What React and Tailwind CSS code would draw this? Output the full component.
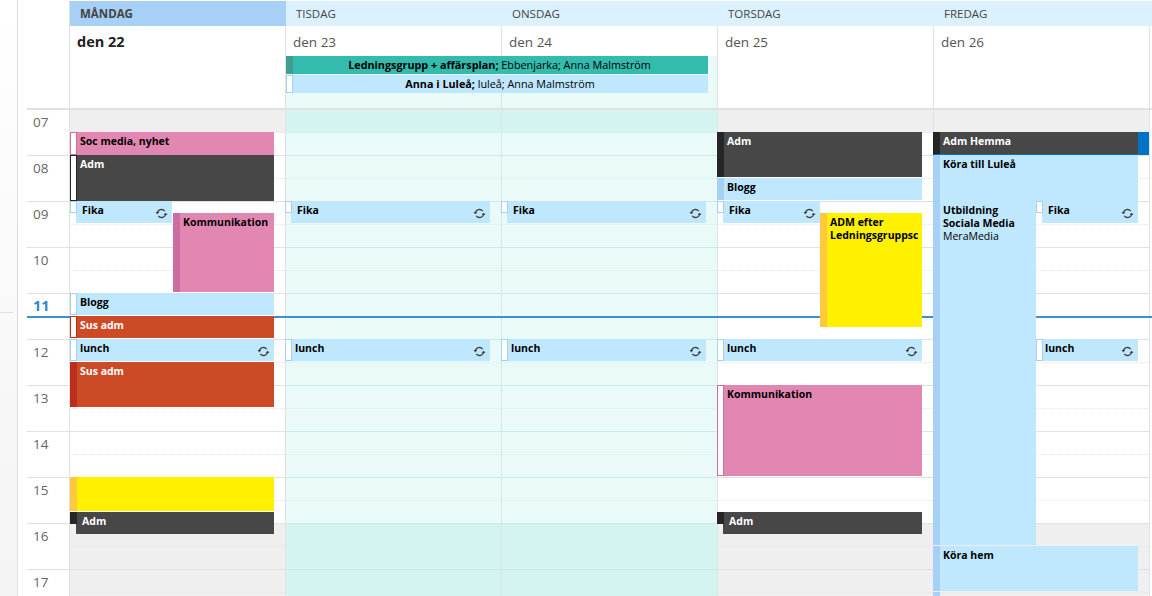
import React from "react";

const Recur = () => (
  <svg viewBox="0 0 12 10" className="absolute right-[4px] bottom-[4px] w-[13px] h-[11px]" fill="none" stroke="#444" strokeWidth="1.2">
    <path d="M2.2 5A3.8 3.8 0 0 1 9 2.8" />
    <path d="M9.8 5A3.8 3.8 0 0 1 3 7.2" />
    <path d="M0.4 3.6 L2.2 5.6 L4 3.6" fill="#444" stroke="none" />
    <path d="M8 6.4 L9.8 4.4 L11.6 6.4" fill="#444" stroke="none" />
  </svg>
);

const Ev = ({ box, bg, text = "text-black", strip, hollow, short, recur, lines, pad = "pl-[10px]" }) => (
  <div className={`absolute z-20 overflow-hidden ${box} ${short ? "" : bg}`}>
    {short ? (
      <>
        <div className={`absolute left-[6px] top-0 right-0 bottom-0 ${bg}`} />
        <div className={`absolute left-0 top-0 w-[7px] h-[12px] ${hollow ? "bg-white border " + hollow : strip}`} />
      </>
    ) : hollow ? (
      <div className={`absolute left-0 top-0 bottom-0 w-[7px] bg-white border ${hollow}`} />
    ) : strip ? (
      <div className={`absolute left-0 top-0 bottom-0 w-[7px] ${strip}`} />
    ) : null}
    <div className={`relative overflow-hidden mt-[3px] mr-[4px] ${short ? "pl-[12px]" : pad} text-[10.5px] leading-[13px] font-bold whitespace-nowrap ${text}`}>
      {lines.map((l, i) => (
        <div key={i} className={l.startsWith("~") ? "font-normal" : ""}>{l.replace("~", "")}</div>
      ))}
    </div>
    {recur && <Recur />}
  </div>
);

const pink = "bg-[#e287b1]";
const dark = "bg-[#474747]";
const blue = "bg-[#bfe7fd]";
const rust = "bg-[#cc4a26]";
const yellow = "bg-[#fff100]";

const hB = "border-[#a6d0f5]";
const pS = "bg-[#cd6ca0]";
const bS = "bg-[#a6d0f5]";
const dS = "bg-[#252525]";
const yS = "bg-[#ffc83d]";

const days = [
  {
    name: "MÅNDAG", date: "den 22", active: true,
    events: [
      { box: "left-0 top-[22px] w-[204px] h-[23px]", bg: pink, hollow: "border-[#cd6ca0]", lines: ["Soc media, nyhet"] },
      { box: "left-0 top-[45px] w-[204px] h-[46px]", bg: dark, text: "text-white", hollow: "border-[#252525]", lines: ["Adm"] },
      { box: "left-0 top-[91px] w-[102px] h-[22px]", bg: blue, hollow: hB, short: true, recur: true, lines: ["Fika"] },
      { box: "left-[103px] top-[103px] w-[101px] h-[79px]", bg: pink, strip: pS, lines: ["Kommunikation"] },
      { box: "left-0 top-[183px] w-[204px] h-[22px]", bg: blue, hollow: hB, lines: ["Blogg"] },
      { box: "left-0 top-[206px] w-[204px] h-[22px]", bg: rust, text: "text-white", hollow: "border-[#bc2e1c]", lines: ["Sus adm"] },
      { box: "left-0 top-[229px] w-[204px] h-[22px]", bg: blue, hollow: hB, recur: true, lines: ["lunch"] },
      { box: "left-0 top-[252px] w-[204px] h-[45px]", bg: rust, text: "text-white", strip: "bg-[#bc2e1c]", lines: ["Sus adm"] },
      { box: "left-0 top-[367px] w-[204px] h-[34px]", bg: yellow, strip: yS, lines: [""] },
      { box: "left-0 top-[402px] w-[204px] h-[22px]", bg: dark, text: "text-white", strip: dS, short: true, lines: ["Adm"] },
    ],
  },
  {
    name: "TISDAG", date: "den 23", teal: true,
    events: [
      { box: "left-[-1px] top-[91px] w-[205px] h-[22px]", bg: blue, hollow: hB, short: true, recur: true, lines: ["Fika"] },
      { box: "left-[-1px] top-[229px] w-[205px] h-[22px]", bg: blue, hollow: hB, recur: true, lines: ["lunch"] },
    ],
  },
  {
    name: "ONSDAG", date: "den 24", teal: true,
    events: [
      { box: "left-[-1px] top-[91px] w-[205px] h-[22px]", bg: blue, hollow: hB, short: true, recur: true, lines: ["Fika"] },
      { box: "left-[-1px] top-[229px] w-[205px] h-[22px]", bg: blue, hollow: hB, recur: true, lines: ["lunch"] },
    ],
  },
  {
    name: "TORSDAG", date: "den 25",
    events: [
      { box: "left-[-1px] top-[22px] w-[205px] h-[45px]", bg: dark, text: "text-white", strip: dS, lines: ["Adm"] },
      { box: "left-[-1px] top-[68px] w-[205px] h-[22px]", bg: blue, strip: bS, lines: ["Blogg"] },
      { box: "left-[-1px] top-[91px] w-[103px] h-[22px]", bg: blue, hollow: hB, short: true, recur: true, lines: ["Fika"] },
      { box: "left-[102px] top-[103px] w-[102px] h-[114px]", bg: yellow, strip: yS, lines: ["ADM efter", "Ledningsgruppsc"] },
      { box: "left-[-1px] top-[229px] w-[205px] h-[22px]", bg: blue, hollow: hB, recur: true, lines: ["lunch"] },
      { box: "left-[-1px] top-[275px] w-[205px] h-[91px]", bg: pink, hollow: "border-[#cd6ca0]", lines: ["Kommunikation"] },
      { box: "left-[-1px] top-[402px] w-[205px] h-[22px]", bg: dark, text: "text-white", strip: dS, short: true, lines: ["Adm"] },
    ],
  },
  {
    name: "FREDAG", date: "den 26",
    events: [
      { box: "left-[204px] top-[22px] w-[11px] h-[23px]", bg: "bg-[#0072c6]", lines: [""] },
      { box: "left-[-1px] top-[22px] w-[205px] h-[23px]", bg: dark, text: "text-white", strip: dS, lines: ["Adm Hemma"] },
      { box: "left-0 top-[44px] w-[204px] h-px", bg: "bg-[#0072c6]", lines: [] },
      { box: "left-[-1px] top-[45px] w-[205px] h-[46px]", bg: blue, strip: bS, lines: ["Köra till Luleå"] },
      { box: "left-[-1px] top-[91px] w-[103px] h-[344px]", bg: blue, strip: bS, lines: ["Utbildning", "Sociala Media", "~MeraMedia"] },
      { box: "left-[102px] top-[91px] w-[102px] h-[22px]", bg: blue, hollow: hB, short: true, recur: true, lines: ["Fika"] },
      { box: "left-[102px] top-[229px] w-[102px] h-[22px]", bg: blue, hollow: hB, recur: true, pad: "pl-[9px]", lines: ["lunch"] },
      { box: "left-[-1px] top-[436px] w-[205px] h-[45px]", bg: blue, strip: bS, lines: ["Köra hem"] },
      { box: "left-[-1px] top-[482px] w-[7px] h-[14px]", bg: bS, lines: [""] },
    ],
  },
];

const hours = ["07", "08", "09", "10", "11", "12", "13", "14", "15", "16", "17"];

const DayColumn = ({ day }) => {
  const slotBg = (off) =>
    day.teal ? (off ? "bg-[#d3f4f1]" : "bg-[#eafaf8]") : off ? "bg-[#efefef]" : "bg-white";
  const solid = day.teal ? "border-[#c8ece8]" : "border-[#e1e1e1]";
  const dot = day.teal ? "border-[#d3f1ee]" : "border-[#e6e6e6]";
  return (
    <div className="w-[216px] shrink-0 flex flex-col">
      <div
        className={`mt-px h-[25px] shrink-0 flex items-center text-[11.5px] text-[#444] ${
          day.active ? "bg-[#a6d0f5] font-bold pl-[10px]" : "bg-[#dcf1fe] pl-[10px]"
        }`}
      >
        {day.name}
      </div>
      <div className="h-[82px] shrink-0 flex flex-col border-r border-[#e1e1e1]">
        <div className={`h-[30px] pl-[7px] pt-[6px] leading-[20px] ${day.active ? "text-[14.5px] font-bold text-[#222]" : "text-[13.5px] text-[#555]"}`}>
          {day.date}
        </div>
        <div className={`flex-1 ${day.teal ? "bg-[#eafaf8]" : "bg-white"}`} />
      </div>
      <div className="h-[2px] shrink-0 bg-[#e1e1e1]" />
      <div className={`relative shrink-0 border-r ${day.teal ? "border-[#d5e8e6]" : "border-[#e1e1e1]"}`}>
        {hours.map((h, i) => (
          <div key={h}>
            <div className={`h-[23px] border-b border-dotted ${dot} ${slotBg(i === 0 || i >= 9)}`} />
            <div className={`h-[23px] border-b ${solid} ${slotBg(i >= 9)}`} />
          </div>
        ))}
        {day.events.map((e, i) => (
          <Ev key={i} {...e} />
        ))}
      </div>
    </div>
  );
};

export default function App() {
  return (
    <div className="relative flex w-[1152px] h-[596px] overflow-hidden bg-white font-['Open_Sans','Noto_Sans',sans-serif]">
      <div className="w-[18px] shrink-0 border-r border-[#dddddd] bg-gradient-to-b from-white to-[#f4f4f4]">
        <div className="mt-[312px] w-[13px] h-px bg-[#e1e1e1]" />
      </div>
      <div className="w-[9px] shrink-0" />
      <div className="w-[43px] shrink-0 flex flex-col border-r border-[#e1e1e1]">
        <div className="h-[108px] shrink-0" />
        <div className="h-[2px] shrink-0 bg-[#e1e1e1]" />
        {hours.map((h) => (
          <div
            key={h}
            className={`h-[46px] shrink-0 border-b border-[#e1e1e1] pl-[6px] pt-[2px] leading-[20px] ${
              h === "11" ? "text-[14.5px] font-bold text-[#2d87d0]" : "text-[13.5px] text-[#666]"
            }`}
          >
            {h}
          </div>
        ))}
      </div>
      {days.map((d) => (
        <DayColumn key={d.name} day={d} />
      ))}
      <div className="flex-1 flex flex-col">
        <div className="mt-px h-[25px] shrink-0 bg-[#dcf1fe]" />
        <div className="mt-[82px] h-[2px] shrink-0 bg-[#e1e1e1]" />
      </div>

      {/* current time line */}
      <div className="absolute z-10 left-[27px] right-0 top-[316px] h-[2px] bg-[#3d8fd4]" />

      {/* multi-day events */}
      <div className="absolute z-20 left-[286px] top-[56px] w-[422px] h-[18px] bg-[#33bbae] text-[10.8px] leading-[17px] text-center text-black pl-[5px]">
        <div className="absolute left-0 top-0 w-[7px] h-full bg-[#3f9f95]" />
        <b>Ledningsgrupp + affärsplan;</b> Ebbenjarka; Anna Malmström
      </div>
      <div className="absolute z-20 left-[286px] top-[75px] w-[422px] h-[18px] bg-[#bfe7fd] text-[10.8px] leading-[18px] text-center text-black pl-[6px]">
        <div className="absolute left-0 top-0 w-[7px] h-full bg-white border border-[#a6d0f5]" />
        <b>Anna i Luleå;</b> luleå; Anna Malmström
      </div>
    </div>
  );
}
